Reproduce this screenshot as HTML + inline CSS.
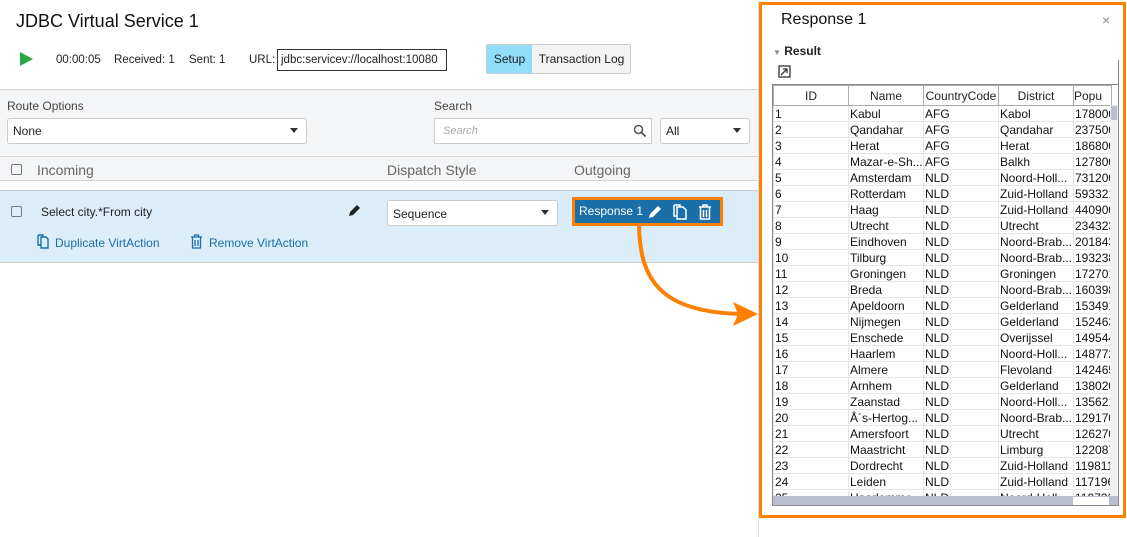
<!DOCTYPE html>
<html><head><meta charset="utf-8"><style>
*{box-sizing:border-box;margin:0;padding:0}
body{width:1127px;height:537px;position:relative;background:#fff;font-family:"Liberation Sans",sans-serif;color:#222;overflow:hidden;font-size:12px}
.a{position:absolute}
.sel{position:absolute;background:#fff;border:1px solid #ccc;border-radius:3px;font-size:12px;padding:0 0 0 5px;line-height:22px}
.sel:after{content:"";position:absolute;right:8px;top:9px;border:4px solid transparent;border-top:5px solid #333}
table{border-collapse:collapse;font-family:"Liberation Sans",sans-serif;font-size:12px;table-layout:fixed}
td{height:16px;border:1px solid #e6e6e6;padding:0 1px;white-space:nowrap;overflow:hidden;line-height:14px;color:#111}
th{height:20px;border:1px solid #aaa;font-weight:normal;white-space:nowrap;overflow:hidden;font-size:12px}
.cb{position:absolute;width:11px;height:11px;border:1.5px solid #777;border-radius:2px}
</style></head><body>
<div class="a" style="left:16px;top:11px;font-size:18px;color:#111">JDBC Virtual Service 1</div>
<div class="a" style="left:20px;top:52px;width:0;height:0;border-left:13px solid #2aa843;border-top:7px solid transparent;border-bottom:7px solid transparent"></div>
<div class="a" style="left:56px;top:54px;font-size:11.5px">00:00:05</div>
<div class="a" style="left:114px;top:54px;font-size:11.5px">Received: 1</div>
<div class="a" style="left:189px;top:54px;font-size:11.5px">Sent: 1</div>
<div class="a" style="left:249px;top:54px;font-size:11.5px">URL:</div>
<div class="a" style="left:277px;top:49px;width:170px;height:22px;border:1px solid #333;font-size:11.5px;line-height:20px;padding-left:3px;white-space:nowrap;overflow:hidden">jdbc:servicev://localhost:10080</div>
<div class="a" style="left:486px;top:44px;width:145px;height:30px;border:1px solid #ccc;border-radius:2px;background:#f3f3f3"></div>
<div class="a" style="left:487px;top:45px;width:45px;height:28px;background:#8fdffb;font-size:12px;line-height:28px;text-align:center">Setup</div>
<div class="a" style="left:533px;top:45px;width:97px;height:28px;font-size:12px;line-height:28px;text-align:center">Transaction Log</div>
<div class="a" style="left:0;top:89px;width:758px;height:101px;background:#f4f5f7;border-top:1px solid #d5d5d5"></div>
<div class="a" style="left:7px;top:99px;font-size:12px;color:#444">Route Options</div>
<div class="sel" style="left:7px;top:118px;width:300px;height:26px;line-height:24px">None</div>
<div class="a" style="left:434px;top:99px;font-size:12px;color:#444">Search</div>
<div class="a" style="left:434px;top:118px;width:218px;height:26px;background:#fff;border:1px solid #ccc;font-style:italic;color:#aaa;font-size:11px;line-height:24px;padding-left:8px">Search
<svg style="position:absolute;right:4px;top:5px" width="14" height="14" viewBox="0 0 14 14"><circle cx="5.5" cy="5.5" r="4" fill="none" stroke="#555" stroke-width="1.5"/><path d="M8.5 8.5L12.5 12.5" stroke="#555" stroke-width="1.8"/></svg></div>
<div class="sel" style="left:660px;top:118px;width:90px;height:26px;line-height:24px">All</div>
<div class="a" style="left:0;top:156px;width:758px;height:1px;background:#d5d5d5"></div>
<div class="cb" style="left:11px;top:164px"></div>
<div class="a" style="left:37px;top:162px;font-size:14px;color:#666">Incoming</div>
<div class="a" style="left:387px;top:162px;font-size:14px;color:#666">Dispatch Style</div>
<div class="a" style="left:574px;top:162px;font-size:14px;color:#666">Outgoing</div>
<div class="a" style="left:0;top:180px;width:758px;height:10px;background:#fff;border-top:1px solid #d5d5d5"></div>
<div class="a" style="left:0;top:190px;width:758px;height:73px;background:#dbedf8;border-top:1px solid #ccc;border-bottom:1px solid #ccc"></div>
<div class="cb" style="left:11px;top:206px"></div>
<div class="a" style="left:41px;top:205px;font-size:12px">Select city.*From city</div>
<svg class="a" style="left:346px;top:203px" width="16" height="16" viewBox="0 0 16 16"><path d="M3 13l1-4 7-7 3 3-7 7z" fill="#222"/></svg>
<div class="sel" style="left:387px;top:200px;width:171px;height:26px;line-height:26px">Sequence</div>
<div class="a" style="left:572px;top:197px;width:151px;height:29px;background:#1a6fa8;border:3px solid #ff7f00;color:#fff;font-size:12px;line-height:23px;padding-left:4px">Response 1
<svg style="position:absolute;left:72px;top:4px" width="16" height="16" viewBox="0 0 16 16"><path d="M2 14l1-4 8-8 3 3-8 8z" fill="#fff"/></svg>
<svg style="position:absolute;left:98px;top:4px" width="14" height="16" viewBox="0 0 14 16"><path d="M4 3h6l3 3v9H4z M1 1h6v2" fill="none" stroke="#fff" stroke-width="1.5"/><path d="M1 1v11h3" fill="none" stroke="#fff" stroke-width="1.5"/></svg>
<svg style="position:absolute;left:123px;top:4px" width="14" height="16" viewBox="0 0 14 16"><path d="M1 3h12M5 3V1h4v2M2.5 3v12h9V3M5.5 6v7M8.5 6v7" fill="none" stroke="#fff" stroke-width="1.5"/></svg></div>
<svg class="a" style="left:37px;top:234px" width="12" height="15" viewBox="0 0 12 15"><path d="M4 3h5l2 2v9H4z M1 1h5v2M1 1v10h3" fill="none" stroke="#1a6fa8" stroke-width="1.4"/></svg>
<div class="a" style="left:55px;top:236px;font-size:12px;color:#1a6fa8">Duplicate VirtAction</div>
<svg class="a" style="left:190px;top:234px" width="13" height="15" viewBox="0 0 13 15"><path d="M1 3h11M4.5 3V1h4v2M2.5 3v11h8V3M5 6v6M8 6v6" fill="none" stroke="#1a6fa8" stroke-width="1.3"/></svg>
<div class="a" style="left:209px;top:236px;font-size:12px;color:#1a6fa8">Remove VirtAction</div>
<div class="a" style="left:758px;top:0;width:1px;height:537px;background:#ddd"></div>
<svg class="a" style="left:630px;top:220px" width="135" height="110" viewBox="0 0 135 110"><path d="M9 5C10 60 30 92 112 94" fill="none" stroke="#ff7f00" stroke-width="4"/><path d="M103 82L128 94L103 106L108 94z" fill="#ff7f00"/></svg>
<div class="a" style="left:759px;top:2px;width:367px;height:516px;border:3px solid #ff7f00"></div>
<div class="a" style="left:781px;top:11px;font-size:16px;color:#111">Response 1</div>
<div class="a" style="left:1102px;top:12px;font-size:14px;color:#888">×</div>
<div class="a" style="left:773px;top:44px;font-size:12px;font-weight:bold"><span style="font-size:8px;color:#888">▼</span> Result</div>
<svg class="a" style="left:778px;top:65px" width="13" height="13" viewBox="0 0 13 13"><rect x="1" y="1" width="11" height="11" fill="none" stroke="#333" stroke-width="1.3"/><path d="M3 10L9 4M5 4h4v4" fill="none" stroke="#333" stroke-width="1.3"/></svg>
<div class="a" style="left:1118px;top:60px;width:1px;height:446px;background:#888"></div>
<div class="a" style="left:772px;top:84px;width:347px;height:422px;border:1px solid #888;overflow:hidden;background:#fff">
<table style="width:338px"><colgroup><col style="width:75px"><col style="width:75px"><col style="width:75px"><col style="width:75px"><col style="width:38px"></colgroup>
<tr><th>ID</th><th>Name</th><th>CountryCode</th><th>District</th><th style="text-align:left">Popu</th></tr>
<tr><td>1</td><td>Kabul</td><td>AFG</td><td>Kabol</td><td>178000</td></tr>
<tr><td>2</td><td>Qandahar</td><td>AFG</td><td>Qandahar</td><td>237500</td></tr>
<tr><td>3</td><td>Herat</td><td>AFG</td><td>Herat</td><td>186800</td></tr>
<tr><td>4</td><td>Mazar-e-Sh...</td><td>AFG</td><td>Balkh</td><td>127800</td></tr>
<tr><td>5</td><td>Amsterdam</td><td>NLD</td><td>Noord-Holl...</td><td>731200</td></tr>
<tr><td>6</td><td>Rotterdam</td><td>NLD</td><td>Zuid-Holland</td><td>593321</td></tr>
<tr><td>7</td><td>Haag</td><td>NLD</td><td>Zuid-Holland</td><td>440900</td></tr>
<tr><td>8</td><td>Utrecht</td><td>NLD</td><td>Utrecht</td><td>234323</td></tr>
<tr><td>9</td><td>Eindhoven</td><td>NLD</td><td>Noord-Brab...</td><td>201843</td></tr>
<tr><td>10</td><td>Tilburg</td><td>NLD</td><td>Noord-Brab...</td><td>193238</td></tr>
<tr><td>11</td><td>Groningen</td><td>NLD</td><td>Groningen</td><td>172701</td></tr>
<tr><td>12</td><td>Breda</td><td>NLD</td><td>Noord-Brab...</td><td>160398</td></tr>
<tr><td>13</td><td>Apeldoorn</td><td>NLD</td><td>Gelderland</td><td>153491</td></tr>
<tr><td>14</td><td>Nijmegen</td><td>NLD</td><td>Gelderland</td><td>152463</td></tr>
<tr><td>15</td><td>Enschede</td><td>NLD</td><td>Overijssel</td><td>149544</td></tr>
<tr><td>16</td><td>Haarlem</td><td>NLD</td><td>Noord-Holl...</td><td>148772</td></tr>
<tr><td>17</td><td>Almere</td><td>NLD</td><td>Flevoland</td><td>142465</td></tr>
<tr><td>18</td><td>Arnhem</td><td>NLD</td><td>Gelderland</td><td>138020</td></tr>
<tr><td>19</td><td>Zaanstad</td><td>NLD</td><td>Noord-Holl...</td><td>135621</td></tr>
<tr><td>20</td><td>Å´s-Hertog...</td><td>NLD</td><td>Noord-Brab...</td><td>129170</td></tr>
<tr><td>21</td><td>Amersfoort</td><td>NLD</td><td>Utrecht</td><td>126270</td></tr>
<tr><td>22</td><td>Maastricht</td><td>NLD</td><td>Limburg</td><td>122087</td></tr>
<tr><td>23</td><td>Dordrecht</td><td>NLD</td><td>Zuid-Holland</td><td>119811</td></tr>
<tr><td>24</td><td>Leiden</td><td>NLD</td><td>Zuid-Holland</td><td>117196</td></tr>
<tr><td>25</td><td>Haarlemme...</td><td>NLD</td><td>Noord-Holl...</td><td>110722</td></tr>
</table>
<div class="a" style="left:337px;top:20px;width:8px;height:400px;background:#f0f0f0"></div>
<div class="a" style="left:338px;top:21px;width:6px;height:14px;background:#b9bfcc"></div>
<div class="a" style="left:0;top:411px;width:345px;height:10px;background:#b9bfcc"></div>
<div class="a" style="left:300px;top:412px;width:36px;height:8px;background:#fff"></div>
</div>
</body></html>
